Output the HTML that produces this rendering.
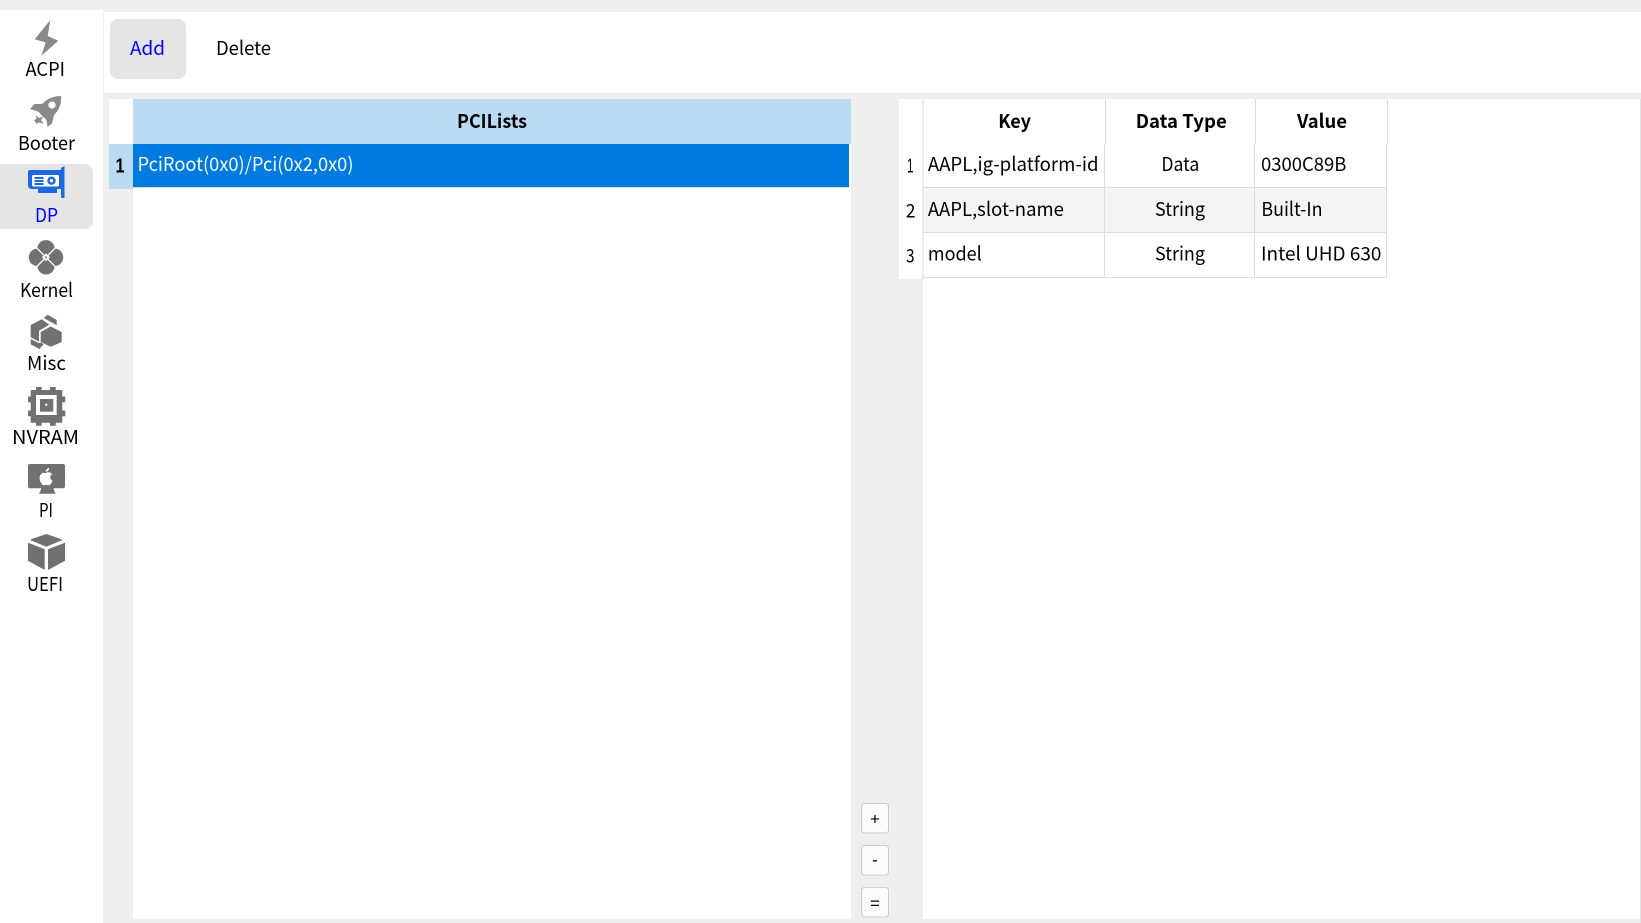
<!DOCTYPE html>
<html lang="en">
<head>
<meta charset="utf-8">
<title>DP</title>
<style>
html,body{margin:0;padding:0;width:1641px;height:923px;overflow:hidden;background:#efefef}
svg{display:block}
text{font-family:"Noto Sans CJK SC","Liberation Sans",sans-serif;font-size:19px;fill:#000}
.b{font-weight:700}
.n{font-family:"Liberation Sans",sans-serif}
.g{fill:#717171}
.l{fill:#8a8a8a}
</style>
</head>
<body>
<svg width="1641" height="923" viewBox="0 0 1641 923" xmlns="http://www.w3.org/2000/svg">
<rect width="1641" height="923" fill="#efefef"/>
<!-- sidebar -->
<rect x="0" y="10" width="103" height="913" fill="#fff"/>
<!-- toolbar -->
<rect x="104" y="12" width="1537" height="81" fill="#fff"/>
<rect x="110" y="19" width="76" height="60" rx="8" fill="#e5e5e5"/>
<text x="130" y="55" style="fill:#0000ff" textLength="35" lengthAdjust="spacingAndGlyphs">Add</text>
<text x="216" y="55" textLength="55" lengthAdjust="spacingAndGlyphs">Delete</text>

<!-- sidebar selected -->
<path d="M0 164H85a8 8 0 0 1 8 8v49a8 8 0 0 1-8 8H0z" fill="#e5e5e5"/>

<!-- ACPI icon -->
<polygon class="l" points="50.3,20 34.7,39.3 45.7,42.5 41.3,55.7 58.3,40.7 47.7,36"/>
<text x="25.500" y="76" textLength="39.500" lengthAdjust="spacingAndGlyphs">ACPI</text>

<!-- Booter icon -->
<path class="l" fill-rule="evenodd" d="M61 96C53 96 47 99 42 104H34.500L30 109L38 111.500L46.500 120L47.500 127L52 123.500L54 115C59 110 61.800 104 61 96ZM52 101.500a3.600 3.600 0 1 1 0 7.200a3.600 3.600 0 1 1 0-7.200Z"/>
<path class="l" d="M36 115L39 118L43 116.500L41 120.500L44 123.500L38 122.500L36.500 124L34 120L36.500 119Z"/>
<text x="18" y="150" textLength="57" lengthAdjust="spacingAndGlyphs">Booter</text>

<!-- DP icon -->
<g fill="#1d68e1">
<path d="M28 172a2 2 0 0 1 2-2H61v19H57v4H38v-4H31.500a3.500 3.500 0 0 1-3.500-3.500Z"/>
<path d="M61 168l3.500-2V198H62a1 1 0 0 1-1-1Z"/>
</g>
<rect x="32" y="175" width="27" height="11.500" rx="1.500" fill="#fff"/>
<g fill="#1d68e1">
<rect x="34.500" y="177" width="9" height="2"/>
<rect x="34.500" y="180" width="9" height="2"/>
<rect x="34.500" y="183" width="9" height="2"/>
<circle cx="51.500" cy="180.700" r="4.200"/>
</g>
<circle cx="51.500" cy="180.700" r="1.700" fill="#fff"/>
<text x="35" y="222" style="fill:#0000ff" textLength="23" lengthAdjust="spacingAndGlyphs">DP</text>

<!-- Kernel icon -->
<g class="g">
<circle cx="46" cy="248.800" r="8.700"/>
<circle cx="46" cy="265.800" r="8.700"/>
<circle cx="37.500" cy="257.300" r="8.700"/>
<circle cx="54.500" cy="257.300" r="8.700"/>
</g>
<path d="M37 248.300L55 266.300M55 248.300L37 266.300" stroke="#fff" stroke-width="1.300"/>
<path d="M46 253.300L50 257.300L46 261.300L42 257.300Z" fill="#fff"/>
<circle cx="46" cy="257.300" r="1" fill="#717171"/>
<text x="20" y="297" textLength="53" lengthAdjust="spacingAndGlyphs">Kernel</text>

<!-- Misc icon -->
<g class="g">
<polygon points="50.700,326.500 61.700,332 61.700,342 50.700,346.700 40.700,342 40.700,332"/>
<polygon points="41.700,319.300 30.700,325 30.700,337.300 39,341.700 39,330.700 49.300,324.700"/>
<polygon points="47.700,314.700 56.700,320 56.700,325.300 43.700,318"/>
<polygon points="30.700,339 39,343.300 41.500,342.500 43.500,344.500 39.300,349 30.700,344.300"/>
</g>
<text x="27" y="370" textLength="39" lengthAdjust="spacingAndGlyphs">Misc</text>

<!-- NVRAM icon -->
<path class="g" d="M36 387h5.700v3h8.300v-3h5.700v3h6.600v6.500h3v5.700h-3v8.300h3v5.700h-3v6.500h-6.600v3h-5.700v-3h-8.300v3H36v-3h-5.300v-6.500h-2.700v-5.700h2.700v-8.300h-2.700v-5.700h2.700V390H36Z"/>
<rect x="36" y="395" width="20.700" height="20" fill="#fff"/>
<rect x="40" y="399" width="13.300" height="12.700" fill="#717171"/>
<rect x="45.300" y="403.700" width="2" height="2" fill="#fff"/>
<text x="12" y="444" textLength="67" lengthAdjust="spacingAndGlyphs">NVRAM</text>

<!-- PI icon -->
<path class="g" d="M30 464H63a2 2 0 0 1 2 2v20.300a2 2 0 0 1-2 2H53.500l.7 2.700 1.500 2.700H39l1.500-2.700.7-2.700H30a2 2 0 0 1-2-2V466a2 2 0 0 1 2-2Z"/>
<path fill="#fff" d="M46.300 472.700c1.200-.6 2.900-.6 4.200 0 .7.300 1.200.8 1.700 1.400-1.300.8-2 1.800-2 3.100 0 1.500.9 2.700 2.300 3.300-.6 2-1.800 4-3.200 4.700-1 .4-1.900-.5-3-.5s-2 .9-3 .5c-2-.9-3.700-4.500-3.700-7.400 0-2.700 1.700-4.800 4-4.900 1-.1 1.900.3 2.700.3Zm-.5-.7c-.1-2 1.300-3.600 3.200-4.200.2 2-1.200 3.800-3.200 4.200Z"/>
<text x="39" y="517" textLength="14" lengthAdjust="spacingAndGlyphs">PI</text>

<!-- UEFI icon -->
<g class="g">
<path d="M46.300 534L61.500 539.300a.6.6 0 0 1 0 1.100L46.300 546.700 31 540.400a.6.6 0 0 1 0-1.100Z"/>
<path d="M28 542.700L44.700 549.300V570L28 560.700Z"/>
<path d="M65 542.700L48 549.300V570L65 560.700Z"/>
</g>
<text x="27" y="591" textLength="36" lengthAdjust="spacingAndGlyphs">UEFI</text>

<!-- left panel -->
<rect x="109" y="99" width="24" height="45" fill="#fff"/>
<rect x="133" y="99" width="718" height="820" fill="#fff"/>
<rect x="133" y="99" width="718" height="45" fill="#bbdbf3"/>
<rect x="109" y="144" width="24" height="45" fill="#bbdbf3"/>
<rect x="133" y="144" width="716" height="43" fill="#007ade"/>
<rect x="133" y="187" width="716" height="1" fill="#d9d9d9"/>
<text class="b" x="457" y="128" textLength="70" lengthAdjust="spacingAndGlyphs">PCILists</text>
<text class="b n" x="115.500" y="172.700" textLength="9" lengthAdjust="spacingAndGlyphs" style="font-size:20px">1</text>
<text x="137.500" y="171" style="fill:#f6fbff" textLength="216" lengthAdjust="spacingAndGlyphs">PciRoot(0x0)/Pci(0x2,0x0)</text>

<!-- +/-/= buttons -->
<g fill="#fcfcfc" stroke="#cbcbcb" stroke-width="1">
<rect x="861.500" y="803.500" width="27" height="29.500" rx="3"/>
<rect x="861.500" y="845.500" width="27" height="29.500" rx="3"/>
<rect x="861.500" y="887.500" width="27" height="29.500" rx="3"/>
</g>
<text class="n" x="875" y="824.700" text-anchor="middle" style="font-size:17px">+</text>
<text class="n" x="875" y="865.600" text-anchor="middle" style="font-size:17px">-</text>
<text class="n" x="875" y="909" text-anchor="middle" style="font-size:17px">=</text>

<!-- right panel -->
<rect x="923" y="99" width="717" height="820" fill="#fff"/>
<rect x="1640" y="99" width="1" height="824" fill="#e2e2e2"/>
<rect x="899" y="99" width="24" height="180" fill="#fff"/>
<rect x="923" y="188" width="464" height="45" fill="#f4f4f4"/>
<g fill="#dcdcdc">
<rect x="922.500" y="99" width="1" height="180"/>
<rect x="1105" y="99" width="1" height="45"/>
<rect x="1255" y="99" width="1" height="45"/>
<rect x="1387" y="99" width="1" height="45"/>
<rect x="1104" y="144" width="1" height="134"/>
<rect x="1254" y="144" width="1" height="134"/>
<rect x="1386" y="144" width="1" height="134"/>
<rect x="923" y="187" width="464" height="1"/>
<rect x="923" y="232" width="464" height="1"/>
<rect x="923" y="277" width="464" height="1"/>
</g>

<text class="b" x="998.200" y="128" textLength="32.800" lengthAdjust="spacingAndGlyphs">Key</text>
<text class="b" x="1135.700" y="128" textLength="91.100" lengthAdjust="spacingAndGlyphs">Data Type</text>
<text class="b" x="1297" y="128" textLength="50" lengthAdjust="spacingAndGlyphs">Value</text>

<text class="n" x="907" y="172.700" textLength="6.500" lengthAdjust="spacingAndGlyphs" style="font-size:20px">1</text>
<text x="905.700" y="217.700" textLength="9.700" lengthAdjust="spacingAndGlyphs">2</text>
<text x="906" y="262.300" textLength="8.600" lengthAdjust="spacingAndGlyphs">3</text>

<text x="927.900" y="171" textLength="170.700" lengthAdjust="spacingAndGlyphs">AAPL,ig-platform-id</text>
<text x="927.900" y="216" textLength="136" lengthAdjust="spacingAndGlyphs">AAPL,slot-name</text>
<text x="927.900" y="260.700" textLength="53.900" lengthAdjust="spacingAndGlyphs">model</text>

<text x="1161.400" y="171" textLength="37.900" lengthAdjust="spacingAndGlyphs">Data</text>
<text x="1155" y="216" textLength="50" lengthAdjust="spacingAndGlyphs">String</text>
<text x="1155" y="260.700" textLength="50" lengthAdjust="spacingAndGlyphs">String</text>

<text x="1261" y="171" textLength="85.400" lengthAdjust="spacingAndGlyphs">0300C89B</text>
<text x="1261.400" y="216" textLength="61.100" lengthAdjust="spacingAndGlyphs">Built-In</text>
<text x="1261" y="260.700" textLength="120.400" lengthAdjust="spacingAndGlyphs">Intel UHD 630</text>
</svg>
</body>
</html>
